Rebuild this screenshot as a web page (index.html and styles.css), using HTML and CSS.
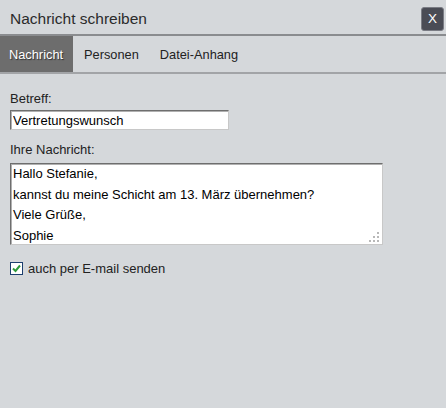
FILE: index.html
```html
<!DOCTYPE html>
<html lang="de">
<head>
<meta charset="utf-8">
<title>Nachricht schreiben</title>
<link rel="stylesheet" href="styles.css">
</head>
<body>
<div class="dialog">
  <header class="titlebar">
    <h1 class="title">Nachricht schreiben</h1>
    <button class="close" type="button">X</button>
  </header>
  <nav class="tabs">
    <span class="tab active">Nachricht</span>
    <span class="tab">Personen</span>
    <span class="tab">Datei-Anhang</span>
  </nav>
  <form class="form">
    <label class="label" for="subject">Betreff:</label>
    <input class="input" id="subject" type="text" value="Vertretungswunsch">
    <label class="label label-msg" for="msg">Ihre Nachricht:</label>
    <div class="area-wrap">
      <textarea class="textarea" id="msg">Hallo Stefanie,
kannst du meine Schicht am 13. März übernehmen?
Viele Grüße,
Sophie</textarea>
      <span class="grip"></span>
    </div>
    <label class="check">
      <span class="box"><svg width="11" height="11" viewBox="0 0 11 11"><path d="M2 5.5 L4.5 8 L9 2.5" fill="none" stroke="#2e9a3a" stroke-width="2"/></svg></span>
      <span>auch per E-mail senden</span>
    </label>
  </form>
</div>
</body>
</html>
```
FILE: styles.css
```css
* { box-sizing: border-box; }
html, body { margin: 0; padding: 0; }
body {
  width: 446px;
  height: 408px;
  background: #d5d8db;
  font-family: "Liberation Sans", Arial, sans-serif;
  font-size: 13px;
  color: #222;
  overflow: hidden;
}
.titlebar {
  height: 36px;
  display: flex;
  align-items: center;
  justify-content: space-between;
  padding: 0 2px 0 10px;
  border-bottom: 2px solid #8a8c8f;
}
.title {
  margin: 0;
  font-size: 15.5px;
  font-weight: normal;
  color: #2b2b2b;
  padding-top: 4px;
}
.close {
  width: 23px;
  height: 24px;
  margin-top: 3px;
  background: #4a4c55;
  border: 1px solid #7a7c84;
  border-radius: 3px;
  color: #fff;
  font-family: "Liberation Sans", Arial, sans-serif;
  font-size: 13.5px;
  padding: 0;
  line-height: 20px;
}
.tabs {
  display: flex;
  height: 38px;
  border-bottom: 2px solid #a2a4a7;
  font-size: 12.8px;
}
.tab {
  display: flex;
  align-items: center;
  padding: 0 10px 0 11px;
  color: #222;
}
.tab.active {
  background: #6d6d6d;
  color: #fff;
  text-shadow: 1px 1px 1px #333;
  padding: 0 10px 0 9px;
}
.form {
  display: flex;
  flex-direction: column;
  align-items: flex-start;
  padding: 17px 10px 0 10px;
}
.label { display: block; line-height: 16px; }
.input {
  margin-top: 3px;
  width: 219px;
  height: 20px;
  border: 1px solid;
  border-color: #6e6e6e #c8c8c8 #c8c8c8 #6e6e6e;
  box-shadow: inset 1px 1px 0 #b0b0b0;
  background: #fff;
  font-family: "Liberation Sans", Arial, sans-serif;
  font-size: 13px;
  padding: 0 2px;
  color: #000;
}
.label-msg { margin-top: 12px; }
.area-wrap {
  position: relative;
  margin-top: 5px;
  width: 373px;
  height: 82px;
}
.textarea {
  display: block;
  width: 100%;
  height: 100%;
  margin: 0;
  border: 1px solid;
  border-color: #6e6e6e #c8c8c8 #c8c8c8 #6e6e6e;
  box-shadow: inset 1px 1px 0 #b0b0b0;
  background: #fff;
  font-family: "Liberation Sans", Arial, sans-serif;
  font-size: 13px;
  line-height: 20.7px;
  padding: 0 2px;
  color: #000;
  resize: none;
  overflow: hidden;
}
.grip {
  position: absolute;
  right: 4px;
  bottom: 3px;
  width: 10px;
  height: 10px;
  background:
    radial-gradient(circle, #b8b8b8 0 1px, transparent 1.2px) 8px 0 / 2px 2px no-repeat,
    radial-gradient(circle, #b8b8b8 0 1px, transparent 1.2px) 4px 4px / 2px 2px no-repeat,
    radial-gradient(circle, #b8b8b8 0 1px, transparent 1.2px) 8px 4px / 2px 2px no-repeat,
    radial-gradient(circle, #b8b8b8 0 1px, transparent 1.2px) 0 8px / 2px 2px no-repeat,
    radial-gradient(circle, #b8b8b8 0 1px, transparent 1.2px) 4px 8px / 2px 2px no-repeat,
    radial-gradient(circle, #b8b8b8 0 1px, transparent 1.2px) 8px 8px / 2px 2px no-repeat;
}
.check {
  display: flex;
  align-items: center;
  gap: 5px;
  margin-top: 16px;
}
.box {
  width: 13px;
  height: 13px;
  border: 1px solid #1c3f6e;
  background: #fff;
  display: flex;
  align-items: center;
  justify-content: center;
}
.box svg { display: block; }
```
